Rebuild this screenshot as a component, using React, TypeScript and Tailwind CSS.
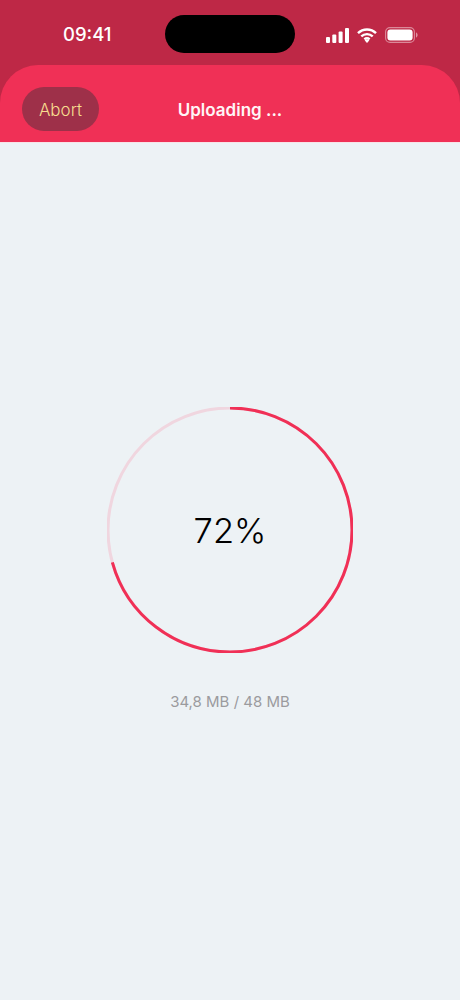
export default function App() {
  const r = 122;
  const c = 2 * Math.PI * r;
  return (
    <div className="flex h-[1000px] w-[460px] flex-col overflow-hidden bg-[#edf2f5] font-['Inter',sans-serif]">
      <div className="bg-[#be2846]">
        <div className="flex h-[65px] items-start">
          <div className="w-[165px] pt-[22px] pl-[63px] text-[18.5px] leading-[24px] font-medium text-white">09:41</div>
          <div className="mt-[15px] h-[38px] w-[130px] rounded-[19px] bg-black" />
          <div className="flex items-center pt-[27px] pl-[31px]">
            <svg width="23" height="15" viewBox="0 0 23 15" fill="white">
              <rect x="0" y="9" width="4" height="6" rx="1" />
              <rect x="6.3" y="6.5" width="4" height="8.5" rx="1" />
              <rect x="12.6" y="3.5" width="4" height="11.5" rx="1" />
              <rect x="19" y="0" width="4" height="15" rx="1" />
            </svg>
            <svg width="20" height="15" viewBox="0 0 20 15" className="ml-[8px]" fill="none" stroke="white" strokeWidth="2.4">
              <path d="M1 5.2a12.8 12.8 0 0 1 18 0" />
              <path d="M4.3 8.4a8.2 8.2 0 0 1 11.4 0" />
              <path d="M7.4 11.3a3.8 3.8 0 0 1 5.2 0" />
              <path d="M10 15l-2.3-2.6a3.2 3.2 0 0 1 4.6 0z" fill="white" stroke="none" />
            </svg>
            <svg width="33" height="16" viewBox="0 0 33 16" className="ml-[8px]">
              <rect x="0.6" y="0.6" width="28.8" height="14.8" rx="4.4" fill="none" stroke="white" strokeOpacity="0.45" strokeWidth="1.1" />
              <rect x="2.4" y="2.4" width="25.2" height="11.2" rx="3" fill="white" />
              <path d="M31 5.5c1 .3 1.6 1.3 1.6 2.5s-.6 2.2-1.6 2.5z" fill="white" fillOpacity="0.5" />
            </svg>
          </div>
        </div>
        <div className="grid h-[77px] grid-cols-[1fr_auto_1fr] items-start rounded-t-[38px] bg-[#f03056] pt-[22px] pl-[22px]">
          <div className="flex">
            <button className="h-[44px] w-[77px] rounded-[22px] bg-[#9e3049] pt-[1px] text-[17px] leading-[44px] font-[350] text-[#f7dd8f]">Abort</button>
          </div>
          <div className="mr-[22px] pt-[11px] text-[17px] leading-[24px] font-semibold text-[#fff5f6]">Uploading ...</div>
          <div />
        </div>
      </div>
      <main className="flex flex-1 flex-col items-center border-t border-[#f8e3e7] pt-[264px]">
        <div className="relative flex h-[246px] w-[246px] items-center justify-center">
          <svg width="246" height="246" viewBox="0 0 246 246" className="absolute inset-0 -rotate-90" fill="none">
            <circle cx="123" cy="123" r={r} stroke="#f0d6df" strokeWidth="3" />
            <circle cx="123" cy="123" r={r} stroke="#f03056" strokeWidth="3" strokeDasharray={`${c * 0.707} ${c}`} />
          </svg>
          <span className="pt-[2px] text-[34.5px] leading-[40px] font-[330] text-black">72%</span>
        </div>
        <div className="mt-[39px] text-[15px] leading-[20px] text-[#9b9b9e]">34,8 MB / 48 MB</div>
      </main>
    </div>
  );
}
